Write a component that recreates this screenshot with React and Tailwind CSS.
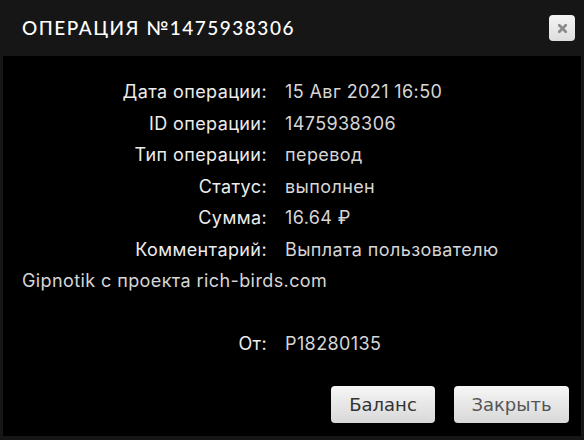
import { X } from 'lucide-react';

const rows = [
  ['Дата операции:', '15 Авг 2021 16:50'],
  ['ID операции:', '1475938306'],
  ['Тип операции:', 'перевод'],
  ['Статус:', 'выполнен'],
  ['Сумма:', '16.64 ₽'],
];

export default function App() {
  return (
    <div className="w-[584px] h-[440px] bg-[#161616] flex flex-col overflow-hidden">
      <div className="h-14 flex items-center justify-between pl-[22px] pr-[9px] shrink-0">
        <h1 className="text-white text-[19px] tracking-[1.5px] font-['Lato',sans-serif] font-medium uppercase">
          Операция №1475938306
        </h1>
        <button
          type="button"
          className="w-[26px] h-[26px] rounded-[4px] bg-gradient-to-b from-[#f4f4f4] to-[#dedede] flex items-center justify-center"
        >
          <X size={13} strokeWidth={5} className="text-[#8a8a8a]" />
        </button>
      </div>

      <div className="mx-[3px] h-[380px] bg-black flex flex-col font-['Inter',sans-serif] text-[18px] tracking-[0.4px] leading-[31.5px]">
        <div className="pt-[20px] pl-[19px] pr-4">
          {rows.map(([label, value]) => (
            <div key={label}>
              <span className="inline-block w-[245px] text-right text-[#ececec]">{label}</span>
              <span className="ml-[18px] text-[#d6d6d6]">{value}</span>
            </div>
          ))}
          <div>
            <span className="inline-block w-[245px] text-right text-[#ececec]">Комментарий:</span>
            <span className="ml-[18px] text-[#d6d6d6]">
              Выплата пользователю
              <br />
              Gipnotik с проекта rich-birds.com
            </span>
          </div>
          <div className="h-[31.5px]" />
          <div>
            <span className="inline-block w-[245px] text-right text-[#ececec]">От:</span>
            <span className="ml-[18px] text-[#d6d6d6]">P18280135</span>
          </div>
        </div>

        <div className="mt-auto mb-[13px] flex justify-end gap-[19px] pr-3 font-['DejaVu_Sans',sans-serif] text-[18px] tracking-normal">
          <button
            type="button"
            className="w-[104px] h-[37px] rounded-[4px] bg-gradient-to-b from-[#f6f6f6] to-[#d8d8d8] text-[#333]"
          >
            Баланс
          </button>
          <button
            type="button"
            className="w-[115px] h-[37px] rounded-[4px] bg-gradient-to-b from-[#f6f6f6] to-[#d8d8d8] text-[#555]"
          >
            Закрыть
          </button>
        </div>
      </div>
    </div>
  );
}
